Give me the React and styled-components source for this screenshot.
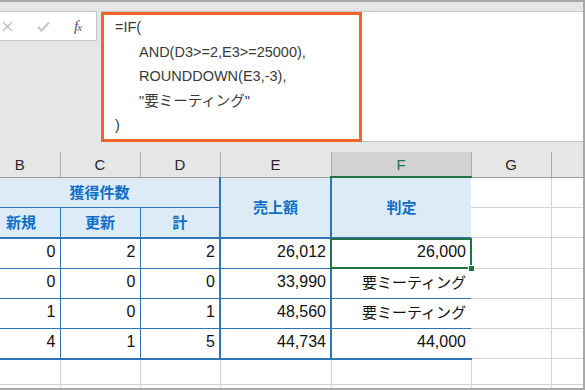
import React from 'react';
import styled, { createGlobalStyle, css } from 'styled-components';

const GlobalStyle = createGlobalStyle`
  html, body {
    margin: 0;
    padding: 0;
    background: #ffffff;
  }
  body {
    font-family: "Liberation Sans", "Noto Sans CJK JP", sans-serif;
  }
`;

const Frame = styled.div`
  width: 585px;
  height: 390px;
  box-sizing: border-box;
  border-top: 2px solid #a8a8a8;
  border-right: 2px solid #a8a8a8;
  border-bottom: 2px solid #a8a8a8;
  overflow: hidden;
  background: #ffffff;
  display: flex;
  flex-direction: column;
`;

const FormulaBar = styled.div`
  background: #e6e6e6;
  padding: 9px 0 10px;
  display: flex;
  align-items: flex-start;
  gap: 4px;
`;

const ButtonBox = styled.div`
  width: 97px;
  height: 30px;
  box-sizing: border-box;
  background: #ffffff;
  border: 1px solid #c6c6c6;
  border-left: none;
  display: flex;
  align-items: center;
  gap: 24px;
  padding-left: 2px;
`;

const Fx = styled.span`
  font-family: "Liberation Serif", serif;
  font-style: italic;
  font-size: 15px;
  color: #555555;
  line-height: 1;
  width: 14px;

  sub {
    font-size: 11px;
    vertical-align: 0;
    margin-left: -1px;
  }
`;

const FormulaField = styled.div`
  flex: 1;
  height: 131px;
  box-sizing: border-box;
  background: #ffffff;
  border-top: 1px solid #c6c6c6;
  border-bottom: 1px solid #c6c6c6;
`;

const Highlight = styled.div`
  width: 261px;
  height: 130px;
  box-sizing: border-box;
  border: 3px solid #f06528;
  padding: 0 0 0 11px;
  font-family: "Liberation Sans", "Noto Sans CJK JP", sans-serif;
  font-size: 14.5px;
  line-height: 24.5px;
  color: #3a3a3a;
`;

const Line = styled.div`
  padding-left: ${p => (p.$indent ? 24 : 0)}px;
  white-space: nowrap;
`;

const Sheet = styled.table`
  border-collapse: collapse;
  table-layout: fixed;
  width: 651px;
  margin-left: -20px;
`;

const ColHead = styled.th`
  height: 24px;
  padding: 0;
  background: ${p => (p.$active ? '#d2d2d2' : '#e6e6e6')};
  color: ${p => (p.$active ? '#217346' : '#262626')};
  font-weight: normal;
  font-size: 15px;
  text-align: center;
  border-right: 1px solid #ababab;
  border-bottom: ${p => (p.$active ? '2px solid #217346' : '1px solid #9b9b9b')};
`;

const HeadCell = styled.td`
  height: 28px;
  padding: 0 0 1px ${p => (p.$left ? 26 : 0)}px;
  background: #ddebf7;
  color: #0f6fc6;
  font-family: "Noto Sans CJK JP", sans-serif;
  font-weight: bold;
  font-size: 15px;
  text-align: ${p => (p.$left ? 'left' : 'center')};
  border: 1px solid #2f75b5;
  border-right: ${p => (p.$thickRight ? '2px solid #2f75b5' : p.$open ? 'none' : '1px solid #2f75b5')};
  border-bottom: ${p => (p.$thickBottom ? '2px solid #2f75b5' : '1px solid #2f75b5')};
  border-left: ${p => (p.$noLeft ? 'none' : undefined)};
`;

const Cell = styled.td`
  position: relative;
  height: 26px;
  padding: 0 ${p => (p.$wide ? 5 : 4)}px 3px 0;
  text-align: right;
  color: #111111;
  font-size: ${p => (p.$jp ? 15 : 16)}px;
  font-family: ${p => (p.$jp ? '"Noto Sans CJK JP", sans-serif' : '"Liberation Sans", sans-serif')};
  border: 1px solid #2f75b5;
  border-left: ${p => (p.$noLeft ? 'none' : undefined)};
  border-right: ${p => (p.$thickRight ? '2px solid #2f75b5' : p.$open ? 'none' : '1px solid #2f75b5')};
  border-bottom: ${p => (p.$thickBottom ? '2px solid #2f75b5' : '1px solid #2f75b5')};

  ${p =>
    p.$selected &&
    css`
      &::after {
        content: '';
        position: absolute;
        left: -2px;
        top: -1px;
        right: -1px;
        bottom: -1px;
        border: 2px solid #217346;
        pointer-events: none;
      }
      &::before {
        content: '';
        position: absolute;
        right: -4px;
        bottom: -4px;
        width: 5px;
        height: 5px;
        background: #217346;
        border: 1px solid #ffffff;
        z-index: 2;
      }
    `}
`;

const Blank = styled.td`
  height: ${p => (p.$short ? 24 : 28)}px;
  padding: 0;
  border-right: 1px solid #d4d4d4;
  border-bottom: 1px solid #d4d4d4;
`;

const CloseIcon = () => (
  <svg width="11" height="11" viewBox="0 0 11 11">
    <path d="M1 1 L10 10 M10 1 L1 10" stroke="#bdbdbd" strokeWidth="1.3" fill="none" />
  </svg>
);

const CheckIcon = () => (
  <svg width="13" height="11" viewBox="0 0 13 11">
    <path d="M1 6 L4.5 9.5 L12 1.5" stroke="#c4c4c4" strokeWidth="2" fill="none" />
  </svg>
);

// H sits mostly off the right edge, so its letter is not shown
const columns = ['B', 'C', 'D', 'E', 'F', 'G', ''];
const widths = [80, 80, 80, 111, 140, 80, 80];

const rows = [
  ['0', '2', '2', '26,012', '26,000'],
  ['0', '0', '0', '33,990', '要ミーティング'],
  ['1', '0', '1', '48,560', '要ミーティング'],
  ['4', '1', '5', '44,734', '44,000'],
];

const App = () => (
  <>
    <GlobalStyle />
    <Frame>
      <FormulaBar>
        <ButtonBox>
          <CloseIcon />
          <CheckIcon />
          <Fx>
            f<sub>x</sub>
          </Fx>
        </ButtonBox>
        <FormulaField>
          <Highlight>
            <Line>=IF(</Line>
            <Line $indent>AND(D3&gt;=2,E3&gt;=25000),</Line>
            <Line $indent>ROUNDDOWN(E3,-3),</Line>
            <Line $indent>"要ミーティング"</Line>
            <Line>)</Line>
          </Highlight>
        </FormulaField>
      </FormulaBar>

      <Sheet>
        <colgroup>
          {widths.map((w, i) => (
            <col key={i} style={{ width: w }} />
          ))}
        </colgroup>
        <tbody>
          <tr>
            {columns.map((c, i) => (
              <ColHead key={i} $active={c === 'F'}>
                {c}
              </ColHead>
            ))}
          </tr>
          <tr>
            <HeadCell colSpan={3} $thickRight $noLeft>
              獲得件数
            </HeadCell>
            <HeadCell rowSpan={2} $thickRight $thickBottom>
              売上額
            </HeadCell>
            <HeadCell rowSpan={2} $thickBottom $open>
              判定
            </HeadCell>
            <Blank />
            <Blank />
          </tr>
          <tr>
            <HeadCell $thickBottom $noLeft $left>
              新規
            </HeadCell>
            <HeadCell $thickBottom>更新</HeadCell>
            <HeadCell $thickBottom $thickRight>
              計
            </HeadCell>
            <Blank />
            <Blank />
          </tr>
          {rows.map((r, i) => {
            const last = i === rows.length - 1;
            return (
              <tr key={i}>
                <Cell $noLeft $thickBottom={last}>{r[0]}</Cell>
                <Cell $thickBottom={last}>{r[1]}</Cell>
                <Cell $thickBottom={last} $thickRight>
                  {r[2]}
                </Cell>
                <Cell $thickBottom={last} $thickRight>
                  {r[3]}
                </Cell>
                <Cell
                  $thickBottom={last}
                  $open
                  $wide
                  $jp={r[4].startsWith('要')}
                  $selected={i === 0}
                >
                  {r[4]}
                </Cell>
                <Blank />
                <Blank />
              </tr>
            );
          })}
          {[0, 1].map(i => (
            <tr key={`e${i}`}>
              {columns.map((c, j) => (
                <Blank key={j} $short />
              ))}
            </tr>
          ))}
        </tbody>
      </Sheet>
    </Frame>
  </>
);

export default App;
